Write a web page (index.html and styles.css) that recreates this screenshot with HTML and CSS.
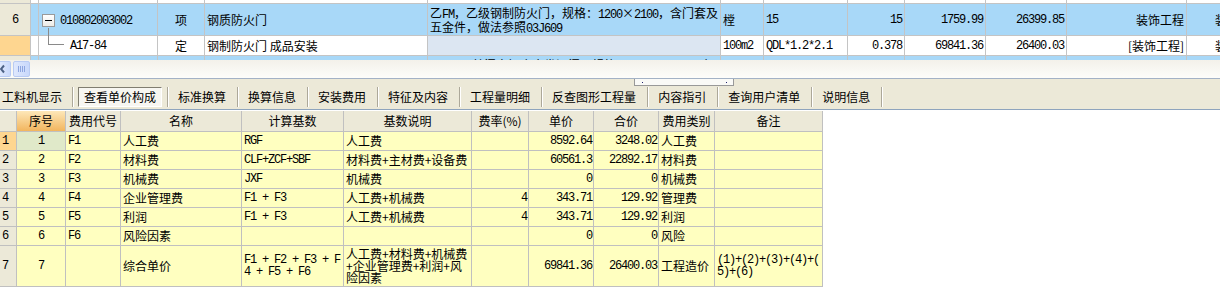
FILE: index.html
```html
<!DOCTYPE html>
<html lang="zh-CN">
<head>
    <meta charset="UTF-8">
    <title>单价构成</title>
    <link rel="stylesheet" href="styles.css">
</head>
<body>

    <!-- 清单区 -->
    <div class="bill-pane">
        <table class="bill-grid">
            <colgroup>
                <col class="b-rh"><col class="b-flag"><col class="b-code"><col class="b-type">
                <col class="b-name"><col class="b-desc"><col class="b-unit"><col class="b-expr">
                <col class="b-qty"><col class="b-price"><col class="b-sum"><col class="b-spec"><col class="b-more">
            </colgroup>
            <tr class="row-cut">
                <td class="rh"></td><td></td><td></td><td></td><td></td><td></td><td></td>
                <td></td><td></td><td></td><td></td><td></td><td></td>
            </tr>
            <tr class="row-item">
                <td class="rh ctr mono">6</td>
                <td></td>
                <td class="code"><span class="tree-box"></span><span class="mono">010802003002</span></td>
                <td class="ctr">项</td>
                <td>钢质防火门</td>
                <td class="desc">乙<span class="mono">FM</span>，乙级钢制防火门，规格：<span class="mono">1200</span>×<span class="mono">2100</span>，含门套及<br>五金件，做法参照<span class="mono">03J609</span></td>
                <td>樘</td>
                <td class="mono">15</td>
                <td class="mono num">15</td>
                <td class="mono num">1759.99</td>
                <td class="mono num">26399.85</td>
                <td class="num">装饰工程</td>
                <td class="num">装饰工程</td>
            </tr>
            <tr class="row-sub">
                <td class="rh rh-cur"></td>
                <td></td>
                <td class="tree-child mono">A17-84</td>
                <td class="ctr">定</td>
                <td>钢制防火门 成品安装</td>
                <td class="desc-empty"></td>
                <td class="mono">100m2</td>
                <td class="mono">QDL*1.2*2.1</td>
                <td class="mono num">0.378</td>
                <td class="mono num">69841.36</td>
                <td class="mono num">26400.03</td>
                <td class="num">[装饰工程]</td>
                <td class="num">装饰工程</td>
            </tr>
            <tr class="row-item">
                <td class="rh"></td>
                <td></td>
                <td></td>
                <td></td>
                <td></td>
                <td class="desc"><span class="mono">M1522</span>，普门扇铝合金卷闸门，规格：<span class="mono">1500</span>×<span class="mono">2200</span>，含<br>电动装置</td>
                <td></td><td></td><td></td><td></td><td></td><td></td><td></td>
            </tr>
        </table>
    </div>

    <div class="hscroll">
        <span class="sb-btn">
            <svg width="11" height="16" viewBox="0 0 11 16"><path d="M5 4.5 L2 8 L5 11.5" fill="none" stroke="#4d6185" stroke-width="2"/></svg>
        </span>
        <span class="sb-thumb">
            <svg width="17" height="16" viewBox="0 0 17 16"><path d="M5.5 5v6M7.5 5v6M9.5 5v6M11.5 5v6" stroke="#8ea6e0" stroke-width="1"/></svg>
        </span>
    </div>

    <!-- 页签 -->
    <div class="tabbar">
        <span class="splitter-grip"><i></i><i></i></span>
        <span class="tab tab-first">工料机显示</span><i class="sep"></i>
        <span class="tab tab-active">查看单价构成</span><i class="sep"></i>
        <span class="tab">标准换算</span><i class="sep"></i>
        <span class="tab">换算信息</span><i class="sep"></i>
        <span class="tab">安装费用</span><i class="sep"></i>
        <span class="tab">特征及内容</span><i class="sep"></i>
        <span class="tab">工程量明细</span><i class="sep"></i>
        <span class="tab">反查图形工程量</span><i class="sep"></i>
        <span class="tab">内容指引</span><i class="sep"></i>
        <span class="tab">查询用户清单</span><i class="sep"></i>
        <span class="tab">说明信息</span><i class="sep"></i>
    </div>

    <!-- 单价构成 -->
    <table class="calc-grid">
        <colgroup>
            <col class="c-rh"><col class="c-seq"><col class="c-code"><col class="c-name">
            <col class="c-base"><col class="c-note"><col class="c-rate"><col class="c-price">
            <col class="c-sum"><col class="c-kind"><col class="c-memo">
        </colgroup>
        <tr class="head">
            <th class="rh"></th>
            <th class="hot">序号</th>
            <th>费用代号</th>
            <th>名称</th>
            <th>计算基数</th>
            <th>基数说明</th>
            <th>费率(%)</th>
            <th>单价</th>
            <th>合价</th>
            <th>费用类别</th>
            <th>备注</th>
        </tr>
        <tr>
            <td class="rh rh-cur mono">1</td>
            <td class="ctr mono seq-cur">1</td>
            <td class="mono">F1</td>
            <td>人工费</td>
            <td class="mono">RGF</td>
            <td>人工费</td>
            <td></td>
            <td class="mono num">8592.64</td>
            <td class="mono num">3248.02</td>
            <td>人工费</td>
            <td></td>
        </tr>
        <tr>
            <td class="rh mono">2</td>
            <td class="ctr mono">2</td>
            <td class="mono">F2</td>
            <td>材料费</td>
            <td class="mono">CLF+ZCF+SBF</td>
            <td>材料费+主材费+设备费</td>
            <td></td>
            <td class="mono num">60561.3</td>
            <td class="mono num">22892.17</td>
            <td>材料费</td>
            <td></td>
        </tr>
        <tr>
            <td class="rh mono">3</td>
            <td class="ctr mono">3</td>
            <td class="mono">F3</td>
            <td>机械费</td>
            <td class="mono">JXF</td>
            <td>机械费</td>
            <td></td>
            <td class="mono num">0</td>
            <td class="mono num">0</td>
            <td>机械费</td>
            <td></td>
        </tr>
        <tr>
            <td class="rh mono">4</td>
            <td class="ctr mono">4</td>
            <td class="mono">F4</td>
            <td>企业管理费</td>
            <td class="mono">F1 + F3</td>
            <td>人工费+机械费</td>
            <td class="mono num">4</td>
            <td class="mono num">343.71</td>
            <td class="mono num">129.92</td>
            <td>管理费</td>
            <td></td>
        </tr>
        <tr>
            <td class="rh mono">5</td>
            <td class="ctr mono">5</td>
            <td class="mono">F5</td>
            <td>利润</td>
            <td class="mono">F1 + F3</td>
            <td>人工费+机械费</td>
            <td class="mono num">4</td>
            <td class="mono num">343.71</td>
            <td class="mono num">129.92</td>
            <td>利润</td>
            <td></td>
        </tr>
        <tr>
            <td class="rh mono">6</td>
            <td class="ctr mono">6</td>
            <td class="mono">F6</td>
            <td>风险因素</td>
            <td></td>
            <td></td>
            <td></td>
            <td class="mono num">0</td>
            <td class="mono num">0</td>
            <td>风险</td>
            <td></td>
        </tr>
        <tr class="row-total">
            <td class="rh mono">7</td>
            <td class="ctr mono">7</td>
            <td></td>
            <td>综合单价</td>
            <td class="mono">F1 + F2 + F3 + F<br>4 + F5 + F6</td>
            <td>人工费+材料费+机械费<br>+企业管理费+利润+风<br>险因素</td>
            <td></td>
            <td class="mono num">69841.36</td>
            <td class="mono num">26400.03</td>
            <td>工程造价</td>
            <td class="mono">(1)+(2)+(3)+(4)+(<br>5)+(6)</td>
        </tr>
    </table>

</body>
</html>
```

FILE: styles.css
```css
body {
    margin: 0;
    width: 1220px;
    height: 305px;
    overflow: hidden;
    background: #fff;
    font-family: "Noto Sans CJK SC", sans-serif;
    font-size: 12px;
    color: #000;
}
table {
    border-collapse: separate;
    border-spacing: 0;
    table-layout: fixed;
}
td, th {
    box-sizing: border-box;
    padding: 0 2px;
    line-height: 12px;
    white-space: nowrap;
    overflow: hidden;
    vertical-align: middle;
    text-align: left;
    font-weight: normal;
}
.mono {
    font-family: "Liberation Mono", monospace;
    letter-spacing: -1.2px;
}
.ctr { text-align: center; }
.num { text-align: right; padding-right: 2px; }

/* 清单区 */
.bill-pane {
    height: 60px;
    overflow: hidden;
}
.bill-grid { width: 1266px; }
.bill-grid td {
    border-right: 1px solid #c4c4c4;
    border-bottom: 1px solid #c4c4c4;
}
.b-rh { width: 31px; }
.b-flag { width: 8px; }
.b-code { width: 119px; }
.b-type { width: 47px; }
.b-name { width: 223px; }
.b-desc { width: 293px; }
.b-unit { width: 43px; }
.b-expr { width: 84px; }
.b-qty { width: 57px; }
.b-price { width: 81px; }
.b-sum { width: 81px; }
.b-spec { width: 120px; }
.b-more { width: 79px; }

.row-cut { height: 4px; }
.row-item { height: 29px; }
.row-sub { height: 20px; }
.row-item td { background: #a8d8f8; }
.row-sub td { background: #fff; }
.bill-grid td.rh { background: #ece9d8; padding: 0; }
.bill-grid td.rh-cur { background: #fed690; }
.bill-grid .desc {
    vertical-align: top;
    padding-top: 3px;
}
.bill-grid .desc-empty { background: #dce6f2; }

.code { padding-left: 3px; }
.tree-box {
    display: inline-block;
    box-sizing: border-box;
    width: 13px;
    height: 13px;
    margin-right: 5px;
    vertical-align: -3px;
    border: 1px solid #9a9a9a;
    background: linear-gradient(#fff, #ecebe6);
    position: relative;
}
.tree-box::after {
    content: "";
    position: absolute;
    left: 2px;
    top: 5px;
    width: 7px;
    height: 1px;
    background: #000;
}
.tree-child {
    position: relative;
    padding-left: 31px;
}
.bill-grid td.tree-child { overflow: visible; }
.tree-child::before {
    content: "";
    position: absolute;
    left: 9px;
    top: -8px;
    width: 15px;
    height: 16px;
    border-left: 1px solid #8a8a8a;
    border-bottom: 1px solid #8a8a8a;
}

/* 横向滚动条 */
.hscroll {
    box-sizing: border-box;
    height: 19px;
    display: flex;
    align-items: center;
    gap: 2px;
    background: linear-gradient(#f3f1ea, #fdfdfa);
    border-bottom: 1px solid #a3b2c6;
}
.sb-btn, .sb-thumb {
    box-sizing: border-box;
    height: 16px;
    border: 1px solid #b9cbf3;
    border-radius: 2px;
    background: linear-gradient(90deg, #dfe8fd, #c8d8fb);
    display: flex;
}
.sb-btn { width: 11px; border-left: none; border-radius: 0 2px 2px 0; }
.sb-thumb { width: 17px; }
.sb-btn svg, .sb-thumb svg { margin: -1px; }

/* 页签 */
.tabbar {
    position: relative;
    box-sizing: border-box;
    height: 31px;
    padding-bottom: 2px;
    display: flex;
    align-items: flex-end;
    background: #ece9d8;
    border-bottom: 1px solid #8ea4bd;
}
.tab {
    height: 20px;
    line-height: 20px;
    padding: 0 11px 0 9px;
    white-space: nowrap;
}
.tab-first { padding: 0 10px 0 2px; }
.tab-active {
    box-sizing: border-box;
    margin: 0 5px 0 4px;
    padding: 0 5px;
    line-height: 18px;
    border: 1px solid;
    border-color: #807d70 #fff #fff #807d70;
    background: #f7f6f1;
}
.sep {
    width: 1px;
    height: 20px;
    background: #aca899;
    border-right: 1px solid #fff;
}
.splitter-grip {
    position: absolute;
    left: 634px;
    top: 0;
    box-sizing: border-box;
    width: 100px;
    height: 7px;
    border: 1px solid #999;
    border-top: none;
    background: #fafaf7;
}
.splitter-grip i {
    position: absolute;
    top: 3px;
    left: 7px;
    width: 1px;
    height: 1px;
    background: #22226e;
}
.splitter-grip i + i { left: 91px; }

/* 单价构成 */
.calc-grid {
    width: 823px;
    margin-top: 1px;
}
.calc-grid td, .calc-grid th {
    border-right: 1px solid #c0c0c0;
    border-bottom: 1px solid #c0c0c0;
}
.calc-grid td { background: #ffffc0; }
.calc-grid .head { height: 21px; }
.calc-grid .head th {
    background: #ece9d8;
    text-align: center;
}
.calc-grid .head th.hot { background: linear-gradient(#fde7b8, #f2b55e); }
.calc-grid tr { height: 19px; }
.calc-grid .row-total { height: 41px; }
.calc-grid td.rh { background: #ece9d8; }
.calc-grid td.rh-cur { background: #fed690; }
.calc-grid td.seq-cur { background: #e0e9c9; }
.calc-grid .num { padding-right: 1px; }
.c-rh { width: 17px; }
.c-seq { width: 49px; }
.c-code { width: 55px; }
.c-name { width: 121px; }
.c-base { width: 102px; }
.c-note { width: 128px; }
.c-rate { width: 57px; }
.c-price { width: 65px; }
.c-sum { width: 65px; }
.c-kind { width: 56px; }
.c-memo { width: 108px; }
```
